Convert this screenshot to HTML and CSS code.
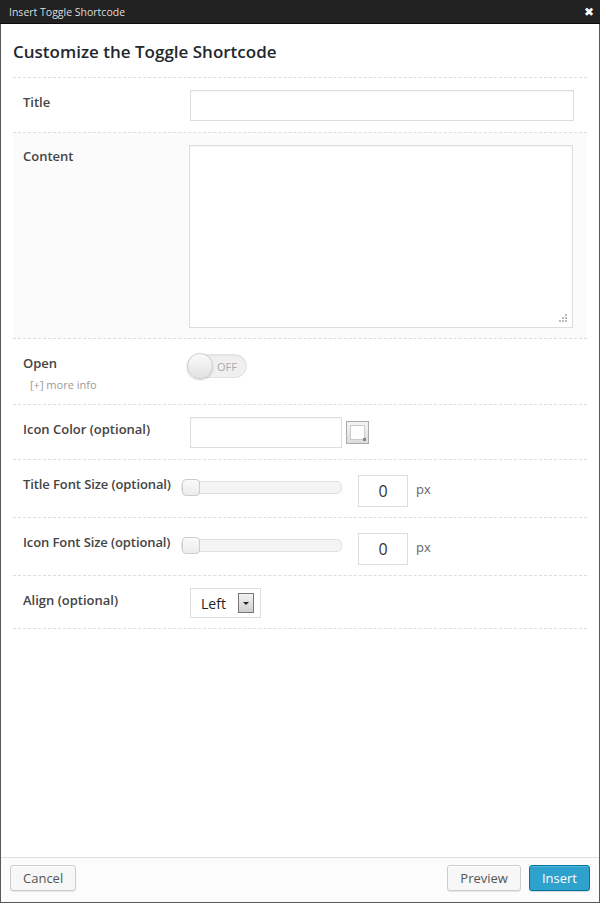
FILE: index.html
```html
<!DOCTYPE html>
<html>
<head>
<meta charset="utf-8">
<link rel="stylesheet" href="styles.css">
</head>
<body>
<div class="frame">
  <div class="titlebar">
    <span class="titlebar-text">Insert Toggle Shortcode</span>
    <span class="close">✖</span>
  </div>
  <div class="main">
    <h1 class="heading">Customize the Toggle Shortcode</h1>
    <div class="rows">
      <div class="row row-title">
        <div class="label">Title</div>
        <div class="field"><div class="input wide"></div></div>
      </div>
      <div class="row row-content">
        <div class="label">Content</div>
        <div class="field">
          <div class="textarea">
            <svg class="grip" width="10" height="10" viewBox="0 0 10 10"><g fill="#bbb"><rect x="7" y="0" width="2" height="2"/><rect x="4" y="3" width="2" height="2"/><rect x="7" y="3" width="2" height="2"/><rect x="1" y="6" width="2" height="2"/><rect x="4" y="6" width="2" height="2"/><rect x="7" y="6" width="2" height="2"/></g></svg>
          </div>
        </div>
      </div>
      <div class="row row-open">
        <div class="label">Open<div class="more">[+] more info</div></div>
        <div class="field">
          <div class="toggle"><span class="knob"></span><span class="off">OFF</span></div>
        </div>
      </div>
      <div class="row row-color">
        <div class="label">Icon Color (optional)</div>
        <div class="field inline">
          <div class="input color"></div>
          <div class="swatch"><span class="swatch-inner"></span></div>
        </div>
      </div>
      <div class="row row-size">
        <div class="label label-tight">Title Font Size (optional)</div>
        <div class="field size-field">
          <div class="slider"><span class="handle"></span></div>
          <div class="num">0</div>
          <span class="px">px</span>
        </div>
      </div>
      <div class="row row-size">
        <div class="label label-tight">Icon Font Size (optional)</div>
        <div class="field size-field">
          <div class="slider"><span class="handle"></span></div>
          <div class="num">0</div>
          <span class="px">px</span>
        </div>
      </div>
      <div class="row row-align">
        <div class="label">Align (optional)</div>
        <div class="field">
          <div class="select"><span>Left</span><span class="arrow"><svg width="8" height="5" viewBox="0 0 8 5"><path d="M1 1 L7 1 L4 4 Z" fill="#222"/></svg></span></div>
        </div>
      </div>
    </div>
  </div>
  <div class="footer">
    <div class="btn">Cancel</div>
    <div class="footer-right">
      <div class="btn">Preview</div>
      <div class="btn primary">Insert</div>
    </div>
  </div>
</div>
</body>
</html>
```
FILE: styles.css
```css
html, body {
  margin: 0;
  padding: 0;
  height: 100%;
}
body {
  font-family: "Open Sans", "Liberation Sans", sans-serif;
  background: #fff;
}
.frame {
  box-sizing: border-box;
  height: 903px;
  width: 600px;
  border: 1px solid #5a5a5a;
  border-top: none;
  display: flex;
  flex-direction: column;
  background: #fff;
}
.titlebar {
  height: 24px;
  box-sizing: border-box;
  background: #222;
  border-bottom: 1px solid #0c0c0c;
  display: flex;
  align-items: center;
  justify-content: space-between;
  padding: 0 6px 0 9px;
  margin: 0 -1px;
}
.titlebar-text {
  color: #ddd;
  font-size: 10.5px;
}
.close {
  color: #fff;
  font-size: 12px;
  font-weight: bold;
  font-family: "DejaVu Sans", sans-serif;
}
.main {
  flex: 1;
  padding: 0 12px;
}
.heading {
  margin: 0;
  line-height: 50px;
  padding-top: 3px;
  font-size: 17px;
  font-weight: 600;
  color: #23282d;
  border-bottom: 1px dashed #ddd;
  box-sizing: border-box;
  height: 54px;
}
.row {
  display: grid;
  grid-template-columns: 177px 1fr;
  border-bottom: 1px dashed #ddd;
  box-sizing: border-box;
}
.label {
  padding-left: 10px;
  font-size: 13px;
  font-weight: 600;
  color: #444;
}
.more {
  font-size: 11px;
  font-weight: 400;
  color: #999;
  margin-top: 5px;
  margin-left: 7px;
}
.row-title { height: 55px; padding-top: 15px; }
.row-content { height: 206px; padding-top: 14px; background: #fbfbfb; }
.row-open { height: 66px; padding-top: 15px; }
.row-color { height: 55px; padding-top: 15px; }
.row-size { height: 58px; padding-top: 15px; }
.row-align { height: 53px; padding-top: 15px; }
.input {
  box-sizing: border-box;
  border: 1px solid #ddd;
  background: #fff;
  height: 31px;
  box-shadow: inset 0 1px 2px rgba(0,0,0,0.04);
}
.row-title .field { margin-top: -3px; }
.wide { width: 384px; }
.textarea {
  box-sizing: border-box;
  width: 384px;
  height: 183px;
  border: 1px solid #ddd;
  background: #fff;
  margin-left: -1px;
  margin-top: -2px;
  position: relative;
  box-shadow: inset 0 1px 2px rgba(0,0,0,0.04);
}
.grip {
  position: absolute;
  right: 4px;
  bottom: 3px;
}
.toggle {
  width: 60px;
  height: 24px;
  margin-left: -3px;
  margin-top: 0;
  box-sizing: border-box;
  border-radius: 12px;
  background: #f0f0f0;
  border: 1px solid #e2e2e2;
  box-shadow: inset 0 1px 2px rgba(0,0,0,0.06);
  display: flex;
  align-items: center;
  position: relative;
}
.knob {
  width: 26px;
  height: 26px;
  border-radius: 50%;
  background: linear-gradient(#fafafa, #e2e2e2);
  border: 1px solid #cfcfcf;
  box-sizing: border-box;
  box-shadow: 0 1px 2px rgba(0,0,0,0.2);
  margin-left: -1px;
}
.off {
  font-size: 11px;
  color: #aaa;
  margin-left: 4px;
}
.inline {
  display: flex;
  align-items: center;
}
.row-color .field { margin-top: -3px; align-items: flex-start; }
.color { width: 152px; }
.swatch {
  width: 23px;
  height: 23px;
  box-sizing: border-box;
  border: 1px solid #aaa;
  background: linear-gradient(#f4f4f4, #ddd);
  margin-left: 4px;
  margin-top: 4px;
  position: relative;
}
.swatch-inner {
  position: absolute;
  left: 3px;
  top: 3px;
  width: 15px;
  height: 15px;
  background: #fff;
  border: 1px solid #ccc;
  box-sizing: border-box;
}
.swatch-inner::after {
  content: "";
  position: absolute;
  right: -2px;
  bottom: -2px;
  width: 3px;
  height: 3px;
  background: #888;
}
.size-field {
  display: flex;
  align-items: flex-start;
  margin-left: -9px;
}
.slider {
  width: 161px;
  height: 13px;
  box-sizing: border-box;
  border: 1px solid #e0e0e0;
  border-radius: 5px;
  background: #f4f4f4;
  position: relative;
  margin-top: 6px;
}
.handle {
  position: absolute;
  left: 0;
  top: -3px;
  width: 18px;
  height: 17px;
  box-sizing: border-box;
  border: 1px solid #ccc;
  border-radius: 4px;
  background: linear-gradient(#fafafa, #ececec);
}
.num {
  box-sizing: border-box;
  width: 50px;
  height: 32px;
  border: 1px solid #ddd;
  background: #fff;
  margin-left: 16px;
  text-align: center;
  line-height: 30px;
  font-size: 16px;
  color: #333;
}
.px {
  margin-left: 8px;
  font-size: 13px;
  color: #666;
  margin-top: 5px;
}
.label-tight { letter-spacing: -0.1px; }
.row-align .field { margin-top: -3px; }
.select {
  box-sizing: border-box;
  width: 71px;
  height: 30px;
  border: 1px solid #ddd;
  background: #fff;
  display: flex;
  align-items: center;
  padding-left: 10px;
  font-size: 14px;
  color: #222;
}
.arrow {
  margin-left: 12px;
  width: 16px;
  height: 20px;
  box-sizing: border-box;
  border: 1px solid #777;
  background: linear-gradient(#f2f2f2, #cfcfcf);
  display: flex;
  align-items: center;
  justify-content: center;
}
.footer {
  height: 45px;
  box-sizing: border-box;
  border-top: 1px solid #dedede;
  background: #fcfcfc;
  display: flex;
  align-items: center;
  justify-content: space-between;
  padding: 0 9px 4px 9px;
}
.footer-right {
  display: flex;
  gap: 8px;
}
.btn {
  box-sizing: border-box;
  height: 26px;
  padding: 0 12px;
  border: 1px solid #ccc;
  border-radius: 3px;
  background: #f7f7f7;
  font-size: 13px;
  color: #555;
  line-height: 24px;
  box-shadow: inset 0 1px 0 #fff, 0 1px 0 rgba(0,0,0,0.08);
}
.btn.primary {
  background: #2ea2cc;
  border-color: #0074a2;
  color: #fff;
  box-shadow: inset 0 1px 0 rgba(120,200,230,0.5), 0 1px 0 rgba(0,0,0,0.15);
  padding: 0 12px;
}
```
